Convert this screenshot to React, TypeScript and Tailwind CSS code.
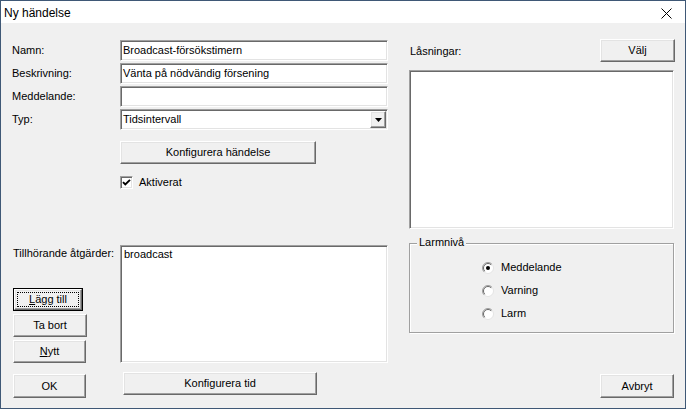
import React from "react";

function Btn({ className, children }: { className: string; children?: React.ReactNode }) {
  return (
    <div
      className={
        "flex items-center justify-center bg-[#f0f0f0] border border-t-white border-l-white border-r-[#696969] border-b-[#696969] shadow-[inset_-1px_-1px_0_#a0a0a0,inset_1px_1px_0_#e3e3e3] " +
        className
      }
    >
      {children}
    </div>
  );
}

function Sunken({ className, children }: { className: string; children?: React.ReactNode }) {
  return (
    <div
      className={
        "bg-white border border-t-[#a0a0a0] border-l-[#a0a0a0] border-r-white border-b-white shadow-[inset_1px_1px_0_#696969,inset_-1px_-1px_0_#e3e3e3] " +
        className
      }
    >
      {children}
    </div>
  );
}

function Row({ label, children }: { label: string; children: React.ReactNode }) {
  return (
    <div className="flex items-center h-[21px]">
      <div className="w-[108px]">{label}</div>
      {children}
    </div>
  );
}

function Radio({ checked, label }: { checked?: boolean; label: string }) {
  return (
    <div className="flex items-center h-[23px] gap-[7px]">
      <svg width="12" height="12" viewBox="0 0 12 12">
        <circle cx="6" cy="6" r="5.5" fill="#fff" stroke="#e3e3e3" />
        <path d="M2.1 9.9 A5.5 5.5 0 0 1 9.9 2.1" stroke="#a0a0a0" fill="none" />
        <path d="M2.8 9.2 A4.5 4.5 0 0 1 9.2 2.8" stroke="#696969" fill="none" />
        {checked && <circle cx="6" cy="6" r="2" fill="#000" />}
      </svg>
      <span>{label}</span>
    </div>
  );
}

export default function App() {
  return (
    <div className="w-[686px] h-[409px] flex flex-col border border-[#3f5876] bg-[#f0f0f0] font-['Liberation_Sans',Arial,sans-serif] text-[11px] leading-[13px] text-black select-none overflow-hidden">
      {/* Title bar */}
      <div className="h-[22px] shrink-0 bg-white flex items-center justify-between pl-[3px] pr-[13px] pt-[2px]">
        <span className="text-[12px] leading-[14px]">Ny händelse</span>
        <svg width="11" height="11" viewBox="0 0 11 11">
          <path d="M0.5 0.5 L10.5 10.5 M10.5 0.5 L0.5 10.5" stroke="#000" strokeWidth="1" />
        </svg>
      </div>

      {/* Content */}
      <div className="flex-1 flex pl-[11px]">
        {/* Left column */}
        <div className="w-[376px] flex flex-col">
          <div className="mt-[17px] flex flex-col gap-[2px]">
            <Row label="Namn:">
              <Sunken className="w-[268px] h-[21px] pl-[2px] flex items-center">Broadcast-försökstimern</Sunken>
            </Row>
            <Row label="Beskrivning:">
              <Sunken className="w-[268px] h-[21px] pl-[2px] flex items-center">Vänta på nödvändig försening</Sunken>
            </Row>
            <Row label="Meddelande:">
              <Sunken className="w-[268px] h-[21px]" />
            </Row>
            <Row label="Typ:">
              <Sunken className="w-[268px] h-[21px] pl-[2px] pr-[1px] flex items-center justify-between">
                <span>Tidsintervall</span>
                <Btn className="w-[16px] h-[17px]">
                  <svg width="7" height="4" viewBox="0 0 7 4">
                    <polygon points="0,0 7,0 3.5,4" fill="#000" />
                  </svg>
                </Btn>
              </Sunken>
            </Row>
          </div>

          <Btn className="ml-[108px] mt-[11px] w-[196px] h-[23px]">Konfigurera händelse</Btn>

          <div className="ml-[108px] mt-[12px] flex items-center gap-[6px] h-[13px]">
            <Sunken className="w-[13px] h-[13px] flex items-center justify-center">
              <svg width="9" height="9" viewBox="0 0 9 9">
                <path d="M1 4.2 L3.3 6.5 L8 1.8" stroke="#000" strokeWidth="1.9" fill="none" />
              </svg>
            </Sunken>
            <span>Aktiverat</span>
          </div>

          <div className="mt-[56px] flex">
            <div className="w-[108px] flex flex-col pl-[1px]">
              <div className="mt-[2px]">Tillhörande åtgärder:</div>
              <div className="mt-[28px] flex flex-col gap-[3px]">
                <div className="w-[70px] h-[23px] border border-black">
                  <div className="relative w-full h-full">
                    <Btn className="w-full h-full">
                      <span>
                        <span className="underline">L</span>ägg till
                      </span>
                    </Btn>
                    <div className="absolute inset-[3px] border border-dotted border-black" />
                  </div>
                </div>
                <Btn className="w-[74px] h-[23px]">Ta bort</Btn>
                <Btn className="w-[73px] h-[23px]">
                  <span>
                    <span className="underline">N</span>ytt
                  </span>
                </Btn>
              </div>
            </div>
            <Sunken className="w-[268px] h-[118px] pl-[3px] pt-[2px]">broadcast</Sunken>
          </div>

          <div className="mt-[9px] flex items-start">
            <Btn className="ml-[1px] mt-[2px] w-[73px] h-[24px]">OK</Btn>
            <Btn className="ml-[37px] w-[194px] h-[23px]">Konfigurera tid</Btn>
          </div>
        </div>

        {/* Right column */}
        <div className="w-[265px] ml-[21px] flex flex-col">
          <div className="mt-[16px] h-[23px] flex items-center justify-between">
            <span className="pl-[1px] pt-[2px]">Låsningar:</span>
            <Btn className="w-[75px] h-[23px] mr-[-1px]">Välj</Btn>
          </div>
          <Sunken className="mt-[8px] h-[159px]" />
          <div className="relative mt-[14px] h-[90px] border border-[#a0a0a0] shadow-[inset_1px_1px_0_#fff,1px_1px_0_#fff]">
            <span className="absolute -top-[8px] left-[7px] px-[2px] bg-[#f0f0f0]">Larmnivå</span>
            <div className="pl-[72px] pt-[12px] flex flex-col">
              <Radio checked label="Meddelande" />
              <Radio label="Varning" />
              <Radio label="Larm" />
            </div>
          </div>
          <Btn className="mt-[41px] self-end w-[74px] h-[24px]">Avbryt</Btn>
        </div>
      </div>
    </div>
  );
}
